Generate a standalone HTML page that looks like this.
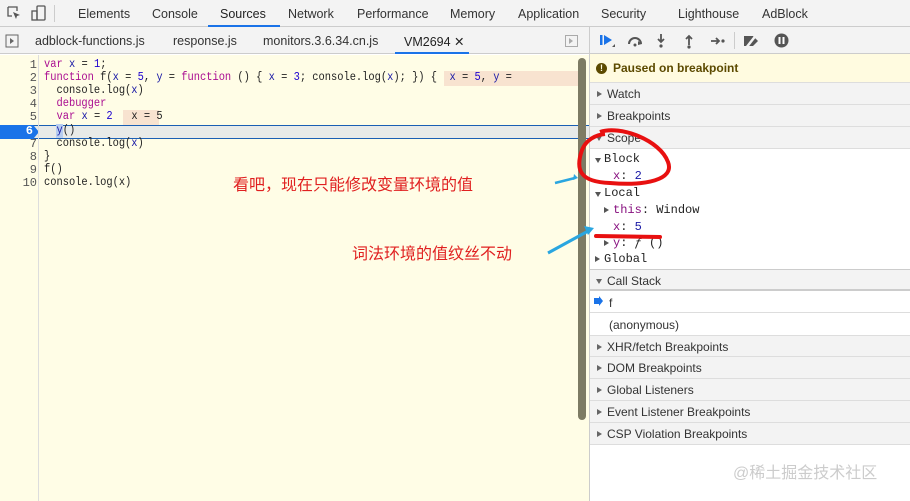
<!DOCTYPE html>
<html><head><meta charset="utf-8"><style>
*{margin:0;padding:0;box-sizing:border-box}
body{width:910px;height:501px;overflow:hidden;background:#fff;font-family:"Liberation Sans",Arial,sans-serif;font-size:12px;color:#333;position:relative}
.abs{position:absolute}
#top{left:0;top:0;width:910px;height:27px;background:#f3f3f3;border-bottom:1px solid #ccc}
#top span{position:absolute;top:7px;font-size:12.5px;color:#333}
#tabs{left:0;top:27px;width:589px;height:27px;background:#f3f3f3;border-bottom:1px solid #ccc}
#tabs span{position:absolute;top:7px;font-size:12.5px;color:#333}
#dbg{left:589px;top:27px;width:321px;height:27px;background:#f3f3f3;border-bottom:1px solid #ccc;border-left:1px solid #ccc}
#ed{left:0;top:55px;width:589px;height:446px;background:#fffde6}
#gut{left:0;top:55px;width:39px;height:446px;border-right:1px solid #ddd}
.ln{position:absolute;left:0;width:37px;text-align:right;font-family:"Liberation Mono",monospace;font-size:12px;color:#555;line-height:13px}
.cl{position:absolute;left:44px;font-family:"Liberation Mono",monospace;font-size:10.4px;color:#222;white-space:pre;line-height:13px;transform:scaleY(1.15);transform-origin:0 50%}
.k{color:#aa0d91}.v{color:#1c00cf}.n{color:#1a1aa6}
#side{left:589px;top:54px;width:321px;height:447px;background:#fff;border-left:1px solid #ccc}
.sec{position:absolute;left:0;width:321px;height:22px;background:#f3f3f3;border-bottom:1px solid #ddd;font-size:12px;padding:4px 0 0 17px;color:#333}
.sec:before{content:"";position:absolute;left:7px;top:8px;border-left:5px solid #666;border-top:3.5px solid transparent;border-bottom:3.5px solid transparent}
.sec.o:before{left:6px;top:9px;border-top:5px solid #666;border-left:3.5px solid transparent;border-right:3.5px solid transparent;border-bottom:0}
.m{position:absolute;font-family:"Liberation Mono",monospace;font-size:12px;color:#222;white-space:pre}
.p{color:#881280}
.cn{font-family:"Liberation Sans","Noto Sans CJK SC",sans-serif;color:#e02020;font-size:16px;position:absolute;white-space:nowrap}
.dn{position:absolute;border-top:5px solid #555;border-left:3.5px solid transparent;border-right:3.5px solid transparent}
.rt{position:absolute;border-left:5px solid #555;border-top:3.5px solid transparent;border-bottom:3.5px solid transparent}
</style></head><body>
<div id="top" class="abs">
<svg class="abs" style="left:7px;top:6px" width="14" height="14"><path d="M1 1h9v4M1 1v9h4" fill="none" stroke="#555" stroke-width="1.3"/><path d="M6 6l7 3-3 1-1 3z" fill="#555"/></svg>
<svg class="abs" style="left:31px;top:5px" width="16" height="16"><rect x="6" y="1" width="8" height="14" rx="1" fill="none" stroke="#555" stroke-width="1.3"/><rect x="1" y="6" width="5" height="9" fill="none" stroke="#555" stroke-width="1.3"/></svg>
<div class="abs" style="left:54px;top:5px;width:1px;height:17px;background:#ccc"></div>
<span style="left:78px">Elements</span><span style="left:152px">Console</span><span style="left:220px;color:#222">Sources</span><span style="left:288px">Network</span><span style="left:357px">Performance</span><span style="left:450px">Memory</span><span style="left:518px">Application</span><span style="left:601px">Security</span><span style="left:678px">Lighthouse</span><span style="left:762px">AdBlock</span>
<div class="abs" style="left:208px;top:25px;width:72px;height:2px;background:#1a73e8"></div>
</div>
<div id="tabs" class="abs">
<svg class="abs" style="left:5px;top:7px" width="14" height="14"><rect x="1" y="1" width="12" height="12" fill="none" stroke="#666"/><path d="M5 4l4 3-4 3z" fill="#666"/></svg>
<span style="left:35px">adblock-functions.js</span><span style="left:173px">response.js</span><span style="left:263px">monitors.3.6.34.cn.js</span><span style="left:404px;color:#222">VM2694 ✕</span>
<div class="abs" style="left:395px;top:25px;width:74px;height:2px;background:#1a73e8"></div>
<svg class="abs" style="left:565px;top:8px" width="14" height="12"><rect x="0.5" y="0.5" width="12" height="11" fill="none" stroke="#aaa"/><path d="M4 3l4 3-4 3z" fill="#aaa"/></svg>
</div>
<div id="dbg" class="abs">
<svg class="abs" style="left:9px;top:6px" width="18" height="16"><rect x="1" y="2" width="2.5" height="10" fill="#1a73e8"/><path d="M5 2l8 5-8 5z" fill="#1a73e8"/><path d="M13 14l3-3v3z" fill="#555"/></svg>
<svg class="abs" style="left:36px;top:7px" width="18" height="14"><path d="M3 10a6 6 0 0 1 12 0" fill="none" stroke="#555" stroke-width="2"/><path d="M12 7l4 3-4 1z" fill="#555"/><circle cx="9" cy="11" r="1.5" fill="#555"/></svg>
<svg class="abs" style="left:66px;top:6px" width="10" height="16"><path d="M5 1v8M2 6l3 3 3-3" fill="none" stroke="#555" stroke-width="1.8"/><circle cx="5" cy="13" r="1.6" fill="#555"/></svg>
<svg class="abs" style="left:94px;top:6px" width="10" height="16"><path d="M5 12V3M2 6l3-3 3 3" fill="none" stroke="#555" stroke-width="1.8"/><circle cx="5" cy="14" r="1.6" fill="#555"/></svg>
<svg class="abs" style="left:120px;top:8px" width="16" height="12"><path d="M1 6h8M6 3l3 3-3 3" fill="none" stroke="#555" stroke-width="1.8"/><circle cx="13" cy="6" r="1.6" fill="#555"/></svg>
<div class="abs" style="left:144px;top:5px;width:1px;height:17px;background:#ccc"></div>
<svg class="abs" style="left:153px;top:7px" width="18" height="14"><path d="M1 2h9l5 5-5 5H1z" fill="#555"/><path d="M3 14L14 0" stroke="#f3f3f3" stroke-width="2.5"/></svg>
<svg class="abs" style="left:184px;top:6px" width="15" height="15"><circle cx="7.5" cy="7.5" r="7" fill="#555"/><rect x="4.5" y="4" width="2" height="7" fill="#fff"/><rect x="8.5" y="4" width="2" height="7" fill="#fff"/></svg>
</div>
<div id="ed" class="abs"></div>
<div class="abs" style="left:0;top:125px;width:589px;height:14px;background:#e8eae8;border-top:1px solid #1a5fb4;border-bottom:1px solid #1a5fb4"></div>
<div class="abs" style="left:0;top:125px;width:39px;height:14px;background:#1a73e8;clip-path:polygon(0 0,85% 0,100% 50%,85% 100%,0 100%)"></div>
<div id="gut" class="abs"></div>
<div class="ln" style="top:59px">1</div><div class="ln" style="top:72px">2</div><div class="ln" style="top:85px">3</div><div class="ln" style="top:98px">4</div><div class="ln" style="top:111px">5</div><div class="ln" style="top:125px;color:#fff;font-weight:bold;width:33px">6</div><div class="ln" style="top:138px">7</div><div class="ln" style="top:151px">8</div><div class="ln" style="top:164px">9</div><div class="ln" style="top:177px">10</div>
<div class="abs" style="left:444px;top:71px;width:135px;height:15px;background:#f8e3d0"></div>
<div class="abs" style="left:123px;top:110px;width:36px;height:15px;background:#f8e3d0"></div>
<div class="cl" style="top:59px"><span class="k">var</span> <span class="n">x</span> = <span class="v">1</span>;</div>
<div class="cl" style="top:72px"><span class="k">function</span> f(<span class="n">x</span> = <span class="v">5</span>, <span class="n">y</span> = <span class="k">function</span> () { <span class="n">x</span> = <span class="v">3</span>; console.log(<span class="n">x</span>); }) {  <span class="n">x</span> = <span class="v">5</span>, <span class="n">y</span> =</div>
<div class="cl" style="top:85px">  console.log(<span class="n">x</span>)</div>
<div class="cl" style="top:98px">  <span class="k">debugger</span></div>
<div class="cl" style="top:111px">  <span class="k">var</span> <span class="n">x</span> = <span class="v">2</span>   x = 5</div>
<div class="cl" style="top:125px">  <span class="n" style="background:#b7cdf0">y</span>()</div>
<div class="cl" style="top:138px">  console.log(<span class="n">x</span>)</div>
<div class="cl" style="top:151px">}</div>
<div class="cl" style="top:164px">f()</div>
<div class="cl" style="top:177px">console.log(x)</div>
<div class="abs" style="left:578px;top:58px;width:8px;height:362px;background:#7d7b64;border-radius:4px"></div>
<div id="side" class="abs">
<div class="abs" style="left:0;top:0;width:321px;height:29px;background:#fffbe0;border-bottom:1px solid #ddd;padding:7px 0 0 23px;font-weight:bold;color:#5c4a00">Paused on breakpoint</div>
<div class="abs" style="left:6px;top:9px;width:11px;height:11px;border-radius:50%;background:#5c4a00;color:#fffbe0;font-size:9px;font-weight:bold;text-align:center;line-height:11px">!</div>
<div class="sec" style="top:29px">Watch</div>
<div class="sec" style="top:51px">Breakpoints</div>
<div class="sec o" style="top:73px">Scope</div>
<div class="m" style="left:14px;top:98px">Block</div>
<div class="dn" style="left:5px;top:104px"></div>
<div class="m" style="left:23px;top:115px"><span class="p">x</span>: <span class="n">2</span></div>
<div class="m" style="left:14px;top:132px">Local</div>
<div class="dn" style="left:5px;top:138px"></div>
<div class="m" style="left:23px;top:149px"><span class="p">this</span>: Window</div>
<div class="rt" style="left:14px;top:153px"></div>
<div class="m" style="left:23px;top:166px"><span class="p">x</span>: <span class="n">5</span></div>
<div class="m" style="left:23px;top:182px"><span class="p">y</span>: <i>ƒ</i> ()</div>
<div class="rt" style="left:14px;top:186px"></div>
<div class="m" style="left:14px;top:198px">Global</div>
<div class="rt" style="left:5px;top:202px"></div>
<div class="sec o" style="top:215px;border-top:1px solid #ccc;border-bottom:2px solid #ccc">Call Stack</div>
<div class="abs" style="left:0;top:237px;width:321px;height:22px;border-bottom:1px solid #ddd;padding:5px 0 0 19px">f</div>
<svg class="abs" style="left:4px;top:242px" width="10" height="10"><path d="M0 2h5V0l4 5-4 5V8H0z" fill="#1a73e8"/></svg>
<div class="abs" style="left:0;top:259px;width:321px;height:22px;padding:5px 0 0 19px">(anonymous)</div>
<div class="sec" style="top:281px;border-top:1px solid #ddd">XHR/fetch Breakpoints</div>
<div class="sec" style="top:303px">DOM Breakpoints</div>
<div class="sec" style="top:325px">Global Listeners</div>
<div class="sec" style="top:347px">Event Listener Breakpoints</div>
<div class="sec" style="top:369px">CSP Violation Breakpoints</div>
<div class="abs" style="left:143px;top:405px;font-family:'Liberation Sans','Noto Sans CJK SC',sans-serif;font-size:16px;color:#ccc">@稀土掘金技术社区</div>
</div>
<div class="cn" style="left:233px;top:171px">看吧，现在只能修改变量环境的值</div>
<div class="cn" style="left:352px;top:240px">词法环境的值纹丝不动</div>
<svg class="abs" style="left:0;top:0" width="910" height="501">
<path d="M555 183L575 178" stroke="#2aa6e0" stroke-width="2.5"/><path d="M574 174l4 4-5 2z" fill="#2aa6e0"/>
<path d="M548 253L590 230" stroke="#2aa6e0" stroke-width="3"/><path d="M584 226l10 2-6 7z" fill="#2aa6e0"/>
<path d="M600 132C620 125 660 140 668 162C675 180 645 186 610 183C580 182 575 170 582 150C586 140 595 135 605 134" fill="none" stroke="#e81010" stroke-width="4"/>
<path d="M596 236L660 237" stroke="#e81010" stroke-width="4" stroke-linecap="round"/>
</svg>
</body></html>
